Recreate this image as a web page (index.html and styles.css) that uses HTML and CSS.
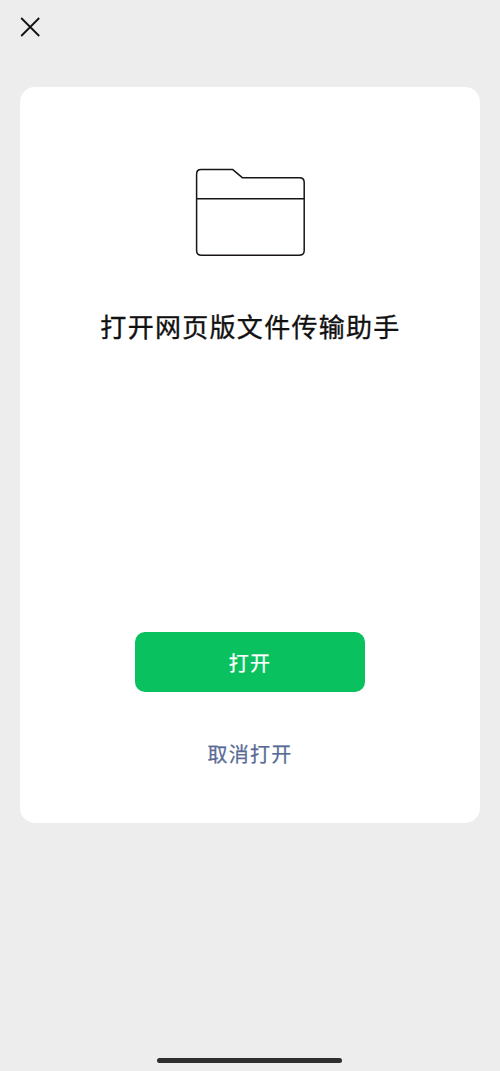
FILE: index.html
```html
<!DOCTYPE html>
<html lang="zh-CN">
<head>
<meta charset="utf-8">
<meta name="viewport" content="width=device-width, initial-scale=1">
<title>文件传输助手</title>
<link rel="stylesheet" href="styles.css">
</head>
<body>
<div class="screen">
  <header class="topbar">
    <button class="close" aria-label="关闭">
      <svg width="20" height="20" viewBox="0 0 20 20" fill="none" stroke="#111" stroke-width="1.8"><path d="M1.200 1L19.200 19M19.200 1L1.200 19"/></svg>
    </button>
  </header>
  <main class="card">
    <svg class="folder" width="110" height="88" viewBox="0 0 110 88" fill="none" stroke="#181418" stroke-width="1.5" stroke-linejoin="round"><path d="M6 1.600H37.800L47.600 9.800H104.500Q109.200 9.800 109.200 14.500V82.600Q109.200 87.200 104.500 87.200H6Q1.600 87.200 1.600 82.600V6.200Q1.600 1.600 6 1.600ZM1.600 30.700H109.200"/></svg>
    <h1 class="title">打开网页版文件传输助手</h1>
    <div class="actions">
      <button class="open">打开</button>
      <button class="cancel">取消打开</button>
    </div>
  </main>
  <div class="home"></div>
</div>
</body>
</html>
```
FILE: styles.css
```css
* { box-sizing: border-box; }
body {
  margin: 0;
  background: #ededed;
  font-family: "Noto Sans CJK SC", sans-serif;
}
button {
  border: 0;
  padding: 0;
  background: none;
  font-family: inherit;
}
.screen {
  height: 1071px;
  display: flex;
  flex-direction: column;
  align-items: center;
}
.topbar {
  width: 100%;
  height: 87px;
  padding: 17px 20px;
}
.close { display: block; width: 20px; height: 20px; }
.close svg { display: block; }
.card {
  width: 460px;
  height: 735.5px;
  padding-top: 81px;
  background: #fff;
  border-radius: 15px;
  display: flex;
  flex-direction: column;
  align-items: center;
}
.folder { display: block; }
.title {
  margin: 50px 0 0;
  padding-left: 1px;
  font-size: 26px;
  line-height: 40px;
  font-weight: 400;
  -webkit-text-stroke: 0.35px currentColor;
  letter-spacing: 1.3px;
  white-space: nowrap;
  color: #111;
}
.actions {
  margin-top: 286px;
  display: flex;
  flex-direction: column;
  align-items: center;
}
.open {
  width: 230px;
  height: 60px;
  border-radius: 10px;
  background: #0ac160;
  color: #fff;
  font-size: 20px;
  font-weight: 400;
  -webkit-text-stroke: 0.25px currentColor;
  letter-spacing: 1.2px;
}
.cancel {
  margin-top: 47px;
  height: 30px;
  color: #576b95;
  font-size: 20px;
  line-height: 30px;
  font-weight: 400;
  -webkit-text-stroke: 0.25px currentColor;
  letter-spacing: 1.2px;
}
.home {
  width: 185px;
  height: 5px;
  margin: auto 1px 8px 0;
  border-radius: 3px;
  background: #2e2e2f;
}
```
